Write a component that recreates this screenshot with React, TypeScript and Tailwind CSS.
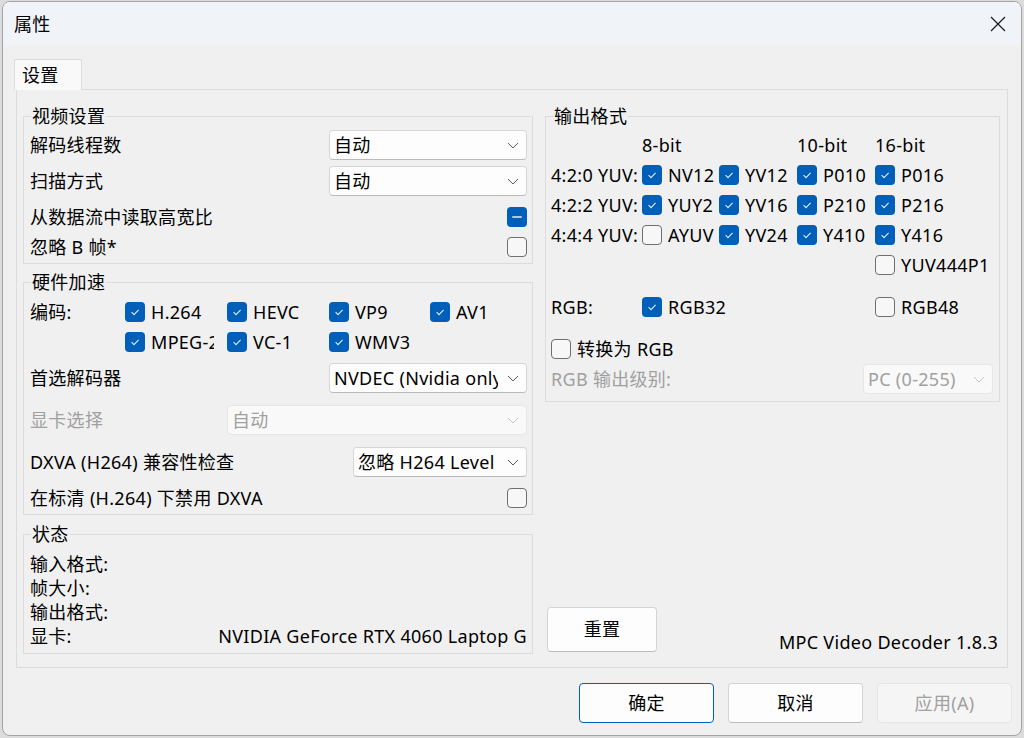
import React from "react";

type Box = "on" | "off" | "mixed";

// small Win11 style checkbox
const CheckBox: React.FC<{ state?: Box }> = ({ state = "on" }) => {
  if (state === "off")
    return <span className="h-5 w-5 shrink-0 rounded-[4px] border border-[#6f6f6f] bg-[#f7f7f7]" />;
  return (
    <span className="flex h-5 w-5 shrink-0 items-center justify-center rounded-[4px] bg-[#005fb8]">
      {state === "mixed" ? (
        <span className="h-[2px] w-[10px] rounded-full bg-[#a9c9ea]" />
      ) : (
        <svg viewBox="0 0 20 20" className="h-5 w-5" fill="none" stroke="#e3edf8" strokeWidth="1.1">
          <path d="M6.6 10.2l2.4 2.4 4.6-4.8" />
        </svg>
      )}
    </span>
  );
};

const Option: React.FC<{ label: string; state?: Box; w?: string }> = ({ label, state = "on", w = "" }) => (
  <div className={`flex items-center gap-[6px] overflow-hidden whitespace-nowrap ${w}`}>
    <CheckBox state={state} />
    <span>{label}</span>
  </div>
);

const Select: React.FC<{ value: string; w: string; disabled?: boolean }> = ({ value, w, disabled }) => (
  <div
    className={`flex h-[30px] shrink-0 items-center rounded-[4px] border ${
      disabled
        ? "border-[#e6e6e6] bg-[#f9f9f9] text-[#a0a0a0]"
        : "border-[#d6d6d6] border-b-[#bababa] bg-[#fdfdfd]"
    } ${w}`}
  >
    <span className="min-w-0 flex-1 overflow-hidden whitespace-nowrap pl-[4px]">{value}</span>
    <svg
      viewBox="0 0 12 7"
      className="ml-[9px] mr-[7px] h-[7px] w-[12px] shrink-0"
      fill="none"
      stroke={disabled ? "#c8c8c8" : "#5c5c5c"}
      strokeWidth="1"
    >
      <path d="M1 1l5 5 5-5" />
    </svg>
  </div>
);

const Group: React.FC<{ title: string; className?: string; children: React.ReactNode }> = ({
  title,
  className = "",
  children,
}) => (
  <fieldset className={`min-w-0 border border-[#dcdcdc] ${className}`}>
    <legend className="ml-[7px] px-px leading-[20px]">{title}</legend>
    {children}
  </fieldset>
);

const Button: React.FC<{ label: string; primary?: boolean; disabled?: boolean }> = ({ label, primary, disabled }) => (
  <button
    className={`flex h-[40px] w-[135px] items-center justify-center rounded-[4px] border ${
      disabled
        ? "border-[#e5e5e5] bg-[#f5f5f5] text-[#a0a0a0]"
        : primary
        ? "border-[#005fb8] bg-[#fdfdfd]"
        : "border-[#d4d4d4] border-b-[#bcbcbc] bg-[#fdfdfd]"
    }`}
  >
    {label}
  </button>
);

const yuvRows: { name: string; items: [string, Box][] }[] = [
  { name: "4:2:0 YUV:", items: [["NV12", "on"], ["YV12", "on"], ["P010", "on"], ["P016", "on"]] },
  { name: "4:2:2 YUV:", items: [["YUY2", "on"], ["YV16", "on"], ["P210", "on"], ["P216", "on"]] },
  { name: "4:4:4 YUV:", items: [["AYUV", "off"], ["YV24", "on"], ["Y410", "on"], ["Y416", "on"]] },
];

export default function App() {
  return (
    <div className="h-[738px] w-[1024px] overflow-hidden bg-[#dcdcdc] pl-[2px] pt-px font-['Noto_Sans','Noto_Sans_CJK_SC',sans-serif] text-[18px] tracking-[0.3px] text-black">
      <div className="flex h-[735px] w-[1020px] flex-col overflow-hidden rounded-lg border border-[#a3a3a3] bg-[#f0f0f0]">
        {/* title bar */}
        <div className="flex h-[43px] shrink-0 items-center justify-between bg-[#f0f4f9] pl-[11px] pr-[15px]">
          <span className="leading-none">属性</span>
          <svg viewBox="0 0 16 16" className="h-[16px] w-[16px]" fill="none" stroke="#1a1a1a" strokeWidth="1.2">
            <path d="M1 1l14 14M15 1L1 15" />
          </svg>
        </div>

        {/* tab */}
        <div className="relative z-10 -mb-px ml-[11px] mt-[14px] flex h-[31px] w-[68px] items-center border-l border-r border-t border-[#dcdcdc] bg-[#f9f9f9] pl-[7px]">
          设置
        </div>

        {/* tab panel */}
        <div className="ml-[13px] flex w-[992px] gap-[12px] border border-[#dcdcdc] pb-[13px] pl-[6px] pr-[7px] pt-[16px]">
          {/* left column */}
          <div className="flex w-[510px] flex-col">
            <Group title="视频设置">
              <div className="flex flex-col pb-[1px] pl-[6px] pr-[5px] pt-[4px]">
                <div className="flex h-[30px] items-center justify-between">
                  <span>解码线程数</span>
                  <Select value="自动" w="w-[198px]" />
                </div>
                <div className="mt-[6px] flex h-[30px] items-center justify-between">
                  <span>扫描方式</span>
                  <Select value="自动" w="w-[198px]" />
                </div>
                <div className="mt-[6px] flex h-[30px] items-center justify-between">
                  <span>从数据流中读取高宽比</span>
                  <CheckBox state="mixed" />
                </div>
                <div className="flex h-[30px] items-center justify-between">
                  <span>忽略 B 帧*</span>
                  <CheckBox state="off" />
                </div>
              </div>
            </Group>

            <Group title="硬件加速" className="mt-[8px]">
              <div className="flex flex-col pb-[1px] pl-[6px] pr-[5px] pt-[5px]">
                <div className="flex">
                  <span className="flex h-[30px] w-[95px] items-center">编码:</span>
                  <div className="grid grid-cols-[102px_102px_101px_auto] auto-rows-[30px] items-center">
                    <Option label="H.264" w="w-[89px]" />
                    <Option label="HEVC" w="w-[89px]" />
                    <Option label="VP9" w="w-[89px]" />
                    <Option label="AV1" w="w-[89px]" />
                    <Option label="MPEG-2" w="w-[89px]" />
                    <Option label="VC-1" w="w-[89px]" />
                    <Option label="WMV3" w="w-[89px]" />
                  </div>
                </div>
                <div className="mt-[6px] flex h-[30px] items-center justify-between">
                  <span>首选解码器</span>
                  <Select value="NVDEC (Nvidia only)" w="w-[198px]" />
                </div>
                <div className="mt-[12px] flex h-[30px] items-center justify-between">
                  <span className="text-[#a0a0a0]">显卡选择</span>
                  <Select value="自动" w="w-[300px]" disabled />
                </div>
                <div className="mt-[12px] flex h-[30px] items-center justify-between">
                  <span>DXVA (H264) 兼容性检查</span>
                  <Select value="忽略 H264 Level" w="w-[174px]" />
                </div>
                <div className="mt-[6px] flex h-[30px] items-center justify-between">
                  <span>在标清 (H.264) 下禁用 DXVA</span>
                  <CheckBox state="off" />
                </div>
              </div>
            </Group>

            <Group title="状态" className="mt-[9px]">
              <div className="flex flex-col pb-[5px] pl-[6px] pr-[5px] pt-[8px]">
                <div className="flex h-[24px] items-center">输入格式:</div>
                <div className="flex h-[24px] items-center">帧大小:</div>
                <div className="flex h-[24px] items-center">输出格式:</div>
                <div className="flex h-[24px] items-center justify-between">
                  <span>显卡:</span>
                  <span className="whitespace-nowrap">NVIDIA GeForce RTX 4060 Laptop G</span>
                </div>
              </div>
            </Group>
          </div>

          {/* right column */}
          <div className="flex w-[455px] flex-col">
            <Group title="输出格式">
              <div className="flex flex-col pb-[7px] pl-[5px] pr-[6px] pt-[4px]">
                <div className="grid grid-cols-[91px_77px_78px_78px_1fr] auto-rows-[30px] items-center whitespace-nowrap">
                  <span />
                  <span>8-bit</span>
                  <span />
                  <span>10-bit</span>
                  <span>16-bit</span>
                  {yuvRows.map((r) => (
                    <React.Fragment key={r.name}>
                      <span>{r.name}</span>
                      {r.items.map(([n, s]) => (
                        <Option key={n} label={n} state={s} />
                      ))}
                    </React.Fragment>
                  ))}
                  <span />
                  <span />
                  <span />
                  <span />
                  <Option label="YUV444P1" state="off" />
                </div>
                <div className="mt-[12px] grid h-[30px] grid-cols-[91px_233px_1fr] items-center whitespace-nowrap">
                  <span>RGB:</span>
                  <Option label="RGB32" />
                  <Option label="RGB48" state="off" />
                </div>
                <div className="mt-[12px] flex h-[30px] items-center">
                  <Option label="转换为 RGB" state="off" />
                </div>
                <div className="flex h-[30px] items-center justify-between">
                  <span className="text-[#a0a0a0]">RGB 输出级别:</span>
                  <Select value="PC (0-255)" w="w-[130px]" disabled />
                </div>
              </div>
            </Group>

            <div className="flex flex-1 items-end justify-between pr-[2px]">
              <button className="mb-[2px] ml-[2px] flex h-[45px] w-[110px] items-center justify-center rounded-[4px] border border-[#d4d4d4] border-b-[#bcbcbc] bg-[#fdfdfd]">
                重置
              </button>
              <span className="leading-[24px]">MPC Video Decoder 1.8.3</span>
            </div>
          </div>
        </div>

        {/* dialog buttons */}
        <div className="mt-[15px] flex justify-end gap-[14px] pr-[9px]">
          <Button label="确定" primary />
          <Button label="取消" />
          <Button label="应用(A)" disabled />
        </div>
      </div>
    </div>
  );
}
